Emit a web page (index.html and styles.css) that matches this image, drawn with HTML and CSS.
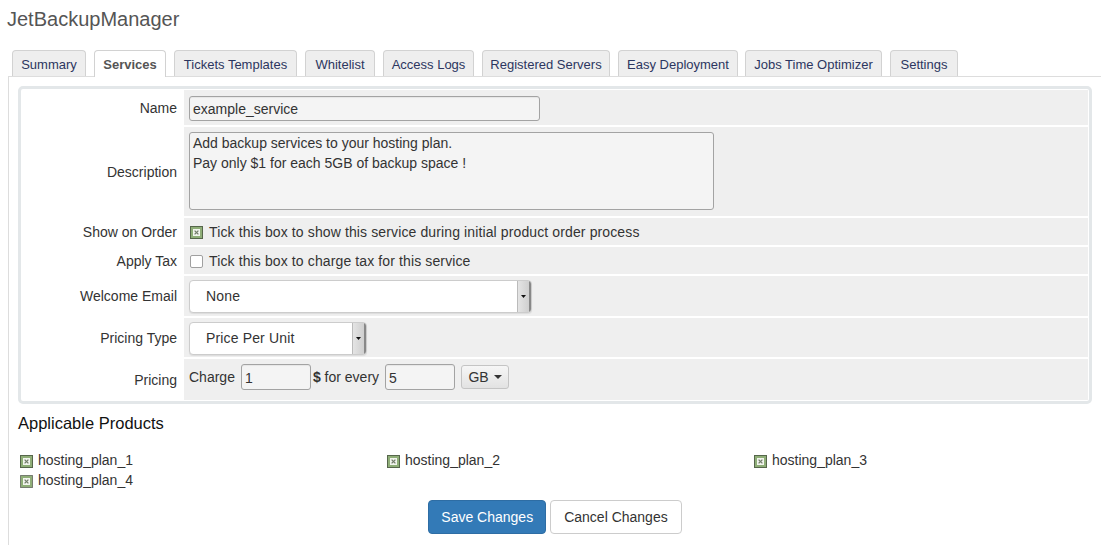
FILE: index.html
```html
<!DOCTYPE html>
<html>
<head>
<meta charset="utf-8">
<link rel="stylesheet" href="styles.css">
</head>
<body>
<div class="title">JetBackupManager</div>
<div class="tabs">
  <div class="tab">Summary</div>
  <div class="tab active">Services</div>
  <div class="tab">Tickets Templates</div>
  <div class="tab">Whitelist</div>
  <div class="tab">Access Logs</div>
  <div class="tab">Registered Servers</div>
  <div class="tab">Easy Deployment</div>
  <div class="tab">Jobs Time Optimizer</div>
  <div class="tab">Settings</div>
</div>
<div class="panel">
  <div class="form-box">
    <div class="row r-name">
      <div class="label">Name</div>
      <div class="field"><div class="input name-input">example_service</div></div>
    </div>
    <div class="row r-desc">
      <div class="label">Description</div>
      <div class="field"><div class="textarea">Add backup services to your hosting plan.<br>Pay only $1 for each 5GB of backup space !</div></div>
    </div>
    <div class="row r-check">
      <div class="label">Show on Order</div>
      <div class="field wide"><span class="cb checked"><svg width="13" height="13" viewBox="0 0 13 13"><rect x="0.5" y="0.5" width="12" height="12" fill="#8fae78" stroke="#56664b"/><rect x="3" y="3" width="7" height="7" fill="#f2f5ee"/><path d="M4.6 4.6 L8.4 8.4 M8.4 4.6 L4.6 8.4" stroke="#737d6b" stroke-width="1.3"/></svg></span>Tick this box to show this service during initial product order process</div>
    </div>
    <div class="row r-check">
      <div class="label">Apply Tax</div>
      <div class="field wide"><span class="cb empty"></span>Tick this box to charge tax for this service</div>
    </div>
    <div class="row r-sel">
      <div class="label">Welcome Email</div>
      <div class="field"><div class="select sel-welcome"><span>None</span><span class="arrow"><svg width="5" height="3" viewBox="0 0 5 3"><path d="M0 0 H5 L2.5 3 Z" fill="#111"/></svg></span></div></div>
    </div>
    <div class="row r-sel2">
      <div class="label">Pricing Type</div>
      <div class="field"><div class="select sel-type"><span>Price Per Unit</span><span class="arrow"><svg width="5" height="3" viewBox="0 0 5 3"><path d="M0 0 H5 L2.5 3 Z" fill="#111"/></svg></span></div></div>
    </div>
    <div class="row r-price">
      <div class="label">Pricing</div>
      <div class="field price">Charge <div class="input small-input">1</div><b>$</b>&nbsp;for every <div class="input small-input">5</div><div class="gb">GB <svg width="8" height="4" viewBox="0 0 8 4"><path d="M0 0 H8 L4 4 Z" fill="#333"/></svg></div></div>
    </div>
  </div>
  <h3 class="products-title">Applicable Products</h3>
  <div class="products">
    <div class="prod"><span class="cb checked"><svg width="13" height="13" viewBox="0 0 13 13"><rect x="0.5" y="0.5" width="12" height="12" fill="#8fae78" stroke="#56664b"/><rect x="3" y="3" width="7" height="7" fill="#f2f5ee"/><path d="M4.6 4.6 L8.4 8.4 M8.4 4.6 L4.6 8.4" stroke="#737d6b" stroke-width="1.3"/></svg></span>hosting_plan_1</div>
    <div class="prod"><span class="cb checked"><svg width="13" height="13" viewBox="0 0 13 13"><rect x="0.5" y="0.5" width="12" height="12" fill="#8fae78" stroke="#56664b"/><rect x="3" y="3" width="7" height="7" fill="#f2f5ee"/><path d="M4.6 4.6 L8.4 8.4 M8.4 4.6 L4.6 8.4" stroke="#737d6b" stroke-width="1.3"/></svg></span>hosting_plan_2</div>
    <div class="prod"><span class="cb checked"><svg width="13" height="13" viewBox="0 0 13 13"><rect x="0.5" y="0.5" width="12" height="12" fill="#8fae78" stroke="#56664b"/><rect x="3" y="3" width="7" height="7" fill="#f2f5ee"/><path d="M4.6 4.6 L8.4 8.4 M8.4 4.6 L4.6 8.4" stroke="#737d6b" stroke-width="1.3"/></svg></span>hosting_plan_3</div>
    <div class="prod"><span class="cb checked"><svg width="13" height="13" viewBox="0 0 13 13"><rect x="0.5" y="0.5" width="12" height="12" fill="#8fae78" stroke="#222" stroke-dasharray="1 1"/><rect x="3" y="3" width="7" height="7" fill="#f2f5ee"/><path d="M4.6 4.6 L8.4 8.4 M8.4 4.6 L4.6 8.4" stroke="#737d6b" stroke-width="1.3"/></svg></span>hosting_plan_4</div>
  </div>
  <div class="buttons">
    <div class="btn btn-primary">Save Changes</div>
    <div class="btn btn-default">Cancel Changes</div>
  </div>
</div>
</body>
</html>
```

FILE: styles.css
```css
body {
  margin: 0;
  font-family: "Liberation Sans", Arial, sans-serif;
  font-size: 14px;
  color: #333;
  background: #fff;
}
.title {
  margin: 8px 0 0 7px;
  font-size: 20px;
  line-height: 22px;
  color: #555;
}
.tabs {
  display: flex;
  gap: 8px;
  margin: 20px 0 0 8px;
  padding-left: 4px;
  border-bottom: 1px solid #ddd;
  height: 26px;
}
.tab {
  box-sizing: border-box;
  height: 26px;
  line-height: 27px;
  text-align: center;
  font-size: 13px;
  color: #2c3660;
  background: #eee;
  border: 1px solid #d2d2d2;
  border-bottom: none;
  border-radius: 4px 4px 0 0;
  white-space: nowrap;
}
.tab:nth-child(1) { width: 74px; }
.tab:nth-child(2) { width: 72px; }
.tab:nth-child(3) { width: 123px; }
.tab:nth-child(4) { width: 70px; }
.tab:nth-child(5) { width: 91px; }
.tab:nth-child(6) { width: 128px; }
.tab:nth-child(7) { width: 120px; margin-right: -1px; }
.tab:nth-child(8) { width: 137px; }
.tab:nth-child(9) { width: 68px; }
.tab.active {
  background: #fff;
  height: 27px;
  font-weight: bold;
  color: #555;
}
.panel {
  margin-left: 8px;
  border-left: 1px solid #ddd;
  padding: 9px 0 11px 9px;
}
.form-box {
  width: 1066px;
  border: 3px solid #e3e7e9;
  border-radius: 5px;
  padding: 1px;
  display: flex;
  flex-direction: column;
  gap: 2px;
}
.row {
  display: grid;
  grid-template-columns: 162px 1fr;
}
.label {
  display: flex;
  align-items: center;
  justify-content: flex-end;
  padding-right: 7px;
  background: #fff;
}
.field {
  display: flex;
  align-items: center;
  background: #efefef;
  padding-left: 5px;
}
.field.wide { letter-spacing: 0.12px; }
.r-name { height: 35px; }
.r-desc { height: 89px; }
.r-check { height: 27px; }
.r-sel { height: 40px; }
.r-sel2 { height: 39px; }
.r-price { height: 41px; }
.input {
  box-sizing: border-box;
  border: 1px solid #a3a3a3;
  border-radius: 3px;
  background: #f4f4f4;
  padding-left: 3px;
  height: 25px;
  line-height: 25px;
  box-shadow: inset 0 1px 1px rgba(0,0,0,0.06);
}
.name-input { width: 351px; margin-top: 2px; }
.textarea {
  box-sizing: border-box;
  width: 525px;
  height: 78px;
  border: 1px solid #a3a3a3;
  border-radius: 3px;
  background: #f4f4f4;
  padding: 1px 3px;
  line-height: 19.5px;
  margin-top: -1px;
}
.cb {
  display: inline-block;
  width: 13px;
  height: 13px;
  margin: 1px 6px 0 1px;
}
.cb svg { display: block; }
.cb.empty {
  box-sizing: border-box;
  border: 1px solid #a0a0a0;
  border-radius: 2px;
  background: #fff;
  width: 13px;
  height: 13px;
  margin: 2px 6px 0 1px;
}
.select {
  box-sizing: border-box;
  display: flex;
  align-items: stretch;
  justify-content: space-between;
  height: 33px;
  background: #fff;
  border: 1px solid #ccc;
  border-radius: 4px;
  box-shadow: 0 1px 1px rgba(0,0,0,0.08);
  overflow: hidden;
}
.select span:first-child {
  padding-left: 16px;
  line-height: 31px;
  letter-spacing: 0.15px;
}
.sel-type { margin-top: 1px; }
.select .arrow {
  width: 11px;
  display: flex;
  align-items: center;
  justify-content: center;
  background: linear-gradient(to right, #e4e4e4, #cfcfcf);
  border-left: 1px solid #bbb;
  border-right: 2px solid #888;
}
.sel-welcome { width: 343px; }
.sel-type { width: 178px; }
.price { padding-bottom: 6px; }
.small-input {
  width: 70px;
  height: 26px;
  line-height: 26px;
  margin: 0 2px 0 6px;
}
.price b { font-weight: bold; }
.gb {
  box-sizing: border-box;
  margin-left: 4px;
  width: 48px;
  height: 24px;
  border: 1px solid #c4c4c4;
  border-radius: 3px;
  background: linear-gradient(#f6f6f6, #e2e2e2);
  display: flex;
  align-items: center;
  justify-content: center;
  gap: 5px;
}
.products-title {
  margin: 8px 0 0 0;
  font-size: 16.5px;
  font-weight: normal;
  color: #111;
  line-height: 22px;
}
.products {
  display: grid;
  grid-template-columns: 367px 367px 367px;
  margin-top: 16px;
  line-height: 20px;
}
.prod {
  display: flex;
  align-items: center;
  color: #333;
}
.prod .cb { margin: 2px 5px 0 2px; }
.buttons {
  display: flex;
  justify-content: center;
  gap: 4px;
  margin-top: 10px;
  padding-right: 9px;
}
.btn {
  box-sizing: border-box;
  height: 34px;
  line-height: 32px;
  padding: 0 12px;
  border: 1px solid transparent;
  border-radius: 4px;
  font-size: 14px;
}
.btn-primary {
  background: #337ab7;
  border-color: #2e6da4;
  color: #fff;
}
.btn-default {
  background: #fff;
  border-color: #ccc;
  color: #333;
  padding: 0 13px;
}
```
